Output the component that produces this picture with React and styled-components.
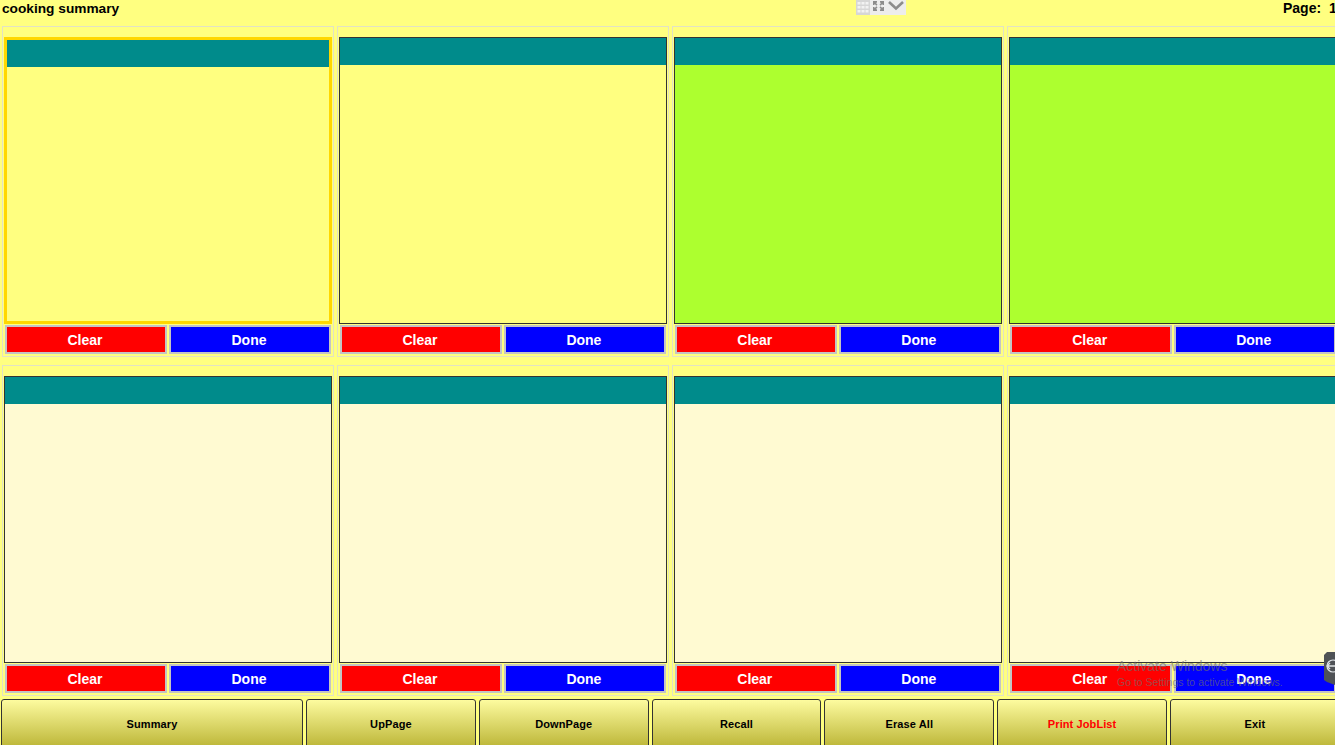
import React from "react";
import styled, { createGlobalStyle } from "styled-components";

const GlobalStyle = createGlobalStyle`
  html, body {
    margin: 0;
    padding: 0;
    height: 100%;
    overflow: hidden;
    background: #ffff80;
    font-family: "Liberation Sans", Arial, sans-serif;
  }
`;

const topRow = [
  { color: "#ffff80", selected: true },
  { color: "#ffff80" },
  { color: "#adff2f" },
  { color: "#adff2f" },
];
const bottomRow = [
  { color: "#fffad2" },
  { color: "#fffad2" },
  { color: "#fffad2" },
  { color: "#fffad2" },
];

const footerButtons = [
  { label: "Summary", width: 302 },
  { label: "UpPage", width: 169.8 },
  { label: "DownPage", width: 169.8 },
  { label: "Recall", width: 169.8 },
  { label: "Erase All", width: 169.8 },
  { label: "Print JobList", width: 169.8, danger: true },
  { label: "Exit", width: 169.8 },
];

function Card({ color, selected }) {
  return (
    <Cell>
      <Ticket $color={color} $selected={selected}>
        <TicketHeader />
      </Ticket>
      <Actions>
        <ActionButton $bg="#ff0000">Clear</ActionButton>
        <ActionButton $bg="#0000ff">Done</ActionButton>
      </Actions>
    </Cell>
  );
}

function ViewTools() {
  return (
    <Tools>
      <svg width="50" height="15" viewBox="0 0 50 15">
        <rect x="0" y="0" width="50" height="15" fill="#ededed" />
        <rect x="0" y="0" width="14" height="15" fill="#d6d6d6" />
        <g fill="#f2f2f2">
          <rect x="1.5" y="2" width="3" height="2.5" />
          <rect x="5.5" y="2" width="3" height="2.5" />
          <rect x="9.5" y="2" width="3" height="2.5" />
          <rect x="1.5" y="6" width="3" height="2.5" />
          <rect x="5.5" y="6" width="3" height="2.5" />
          <rect x="9.5" y="6" width="3" height="2.5" />
          <rect x="1.5" y="10" width="3" height="2.5" />
          <rect x="5.5" y="10" width="3" height="2.5" />
          <rect x="9.5" y="10" width="3" height="2.5" />
        </g>
        <g fill="#8c8c8c">
          <path d="M17 1h4v1.5l-1 .5 1.5 1.5-1.2 1.2L18.8 4l-.5 1H17z" />
          <path d="M28 1h-4v1.5l1 .5-1.5 1.5 1.2 1.2L26.2 4l.5 1H28z" />
          <path d="M17 11h4V9.5l-1-.5 1.5-1.5-1.2-1.2L18.8 8l-.5-1H17z" />
          <path d="M28 11h-4V9.5l1-.5-1.5-1.5 1.2-1.2L26.2 8l.5-1H28z" />
        </g>
        <path d="M33 2l7 6.5L47 2" fill="none" stroke="#8c8c8c" strokeWidth="2.6" />
      </svg>
    </Tools>
  );
}

export default function App() {
  return (
    <Page>
      <GlobalStyle />
      <TopBar>
        <Title>cooking summary</Title>
        <ViewTools />
        <PageInfo>Page:&nbsp; 1</PageInfo>
      </TopBar>
      <Grid>
        {[...topRow, ...bottomRow].map((card, i) => (
          <Card key={i} {...card} />
        ))}
      </Grid>
      <Footer>
        {footerButtons.map((b) => (
          <FooterButton key={b.label} $width={b.width} $danger={b.danger}>
            {b.label}
          </FooterButton>
        ))}
      </Footer>
      <Watermark>
        <WatermarkTitle>Activate Windows</WatermarkTitle>
        <WatermarkText>Go to Settings to activate Windows.</WatermarkText>
      </Watermark>
      <SideTab>
        <svg width="11" height="33" viewBox="0 0 11 33">
          <path d="M3 0h8v33l-8-3-3-2V3z" fill="#4f5256" />
          <path d="M3 14h8M3 14l3-3M3 14l3 3" stroke="#dfe3e6" strokeWidth="1.4" fill="none" />
          <circle cx="9" cy="14" r="6" fill="none" stroke="#dfe3e6" strokeWidth="1.2" />
        </svg>
      </SideTab>
    </Page>
  );
}

const Page = styled.div`
  position: relative;
  width: 1335px;
  height: 745px;
  overflow: hidden;
  background: #ffff80;
`;
const TopBar = styled.div`
  display: flex;
  align-items: flex-start;
  height: 26px;
  width: 1335px;
  padding-left: 2px;
  box-sizing: border-box;
`;
const Title = styled.div`
  width: 854px;
  font-size: 13.7px;
  line-height: 17px;
  font-weight: 700;
  color: #000;
`;
const Tools = styled.div`
  width: 50px;
  height: 15px;
  line-height: 0;
`;
const PageInfo = styled.div`
  margin-left: auto;
  width: 52px;
  white-space: nowrap;
  overflow: hidden;
  font-size: 14px;
  line-height: 17px;
  font-weight: 700;
  color: #000;
`;
const Grid = styled.div`
  display: grid;
  grid-template-columns: repeat(4, 332px);
  grid-template-rows: repeat(2, 331px);
  column-gap: 2.9px;
  row-gap: 8px;
  margin-left: 2px;
`;
const Cell = styled.div`
  box-sizing: border-box;
  display: flex;
  flex-direction: column;
  padding: 10px 1px 0 1px;
  border: 1px solid #e2e2c4;
`;
const Ticket = styled.div`
  box-sizing: border-box;
  height: 287px;
  background: ${(p) => p.$color};
  border: ${(p) => (p.$selected ? "3px solid #ffd700" : "1px solid #333")};
`;
const TicketHeader = styled.div`
  height: 27px;
  background: #008b8b;
`;
const Actions = styled.div`
  display: grid;
  grid-template-columns: 1fr 1fr;
  column-gap: 2px;
  padding: 1px 1px 0;
`;
const ActionButton = styled.div`
  box-sizing: border-box;
  height: 29px;
  padding-right: 2px;
  display: flex;
  align-items: center;
  justify-content: center;
  background: ${(p) => p.$bg};
  border: 2px solid #c4c4c4;
  color: #fff;
  font-size: 14px;
  font-weight: 700;
`;
const Footer = styled.div`
  display: flex;
  gap: 3px;
  margin-top: 3px;
  margin-left: 1px;
  width: 1400px;
`;
const FooterButton = styled.div`
  box-sizing: border-box;
  flex: 0 0 ${(p) => p.$width}px;
  height: 52px;
  padding-bottom: 2px;
  display: flex;
  align-items: center;
  justify-content: center;
  border: 1px solid #333;
  border-radius: 3px 3px 0 0;
  background: linear-gradient(#fdfb9f, #bfb93c 90%);
  color: ${(p) => (p.$danger ? "#ff0000" : "#000")};
  font-size: 11px;
  letter-spacing: 0.1px;
  font-weight: 700;
`;
const Watermark = styled.div`
  position: absolute;
  left: 1117px;
  top: 658px;
  color: rgba(110, 110, 110, 0.65);
  white-space: nowrap;
`;
const WatermarkTitle = styled.div`
  font-size: 14px;
  line-height: 16px;
`;
const WatermarkText = styled.div`
  font-size: 10.5px;
  line-height: 14px;
  margin-top: 1px;
`;
const SideTab = styled.div`
  position: absolute;
  right: 0;
  top: 652px;
  width: 11px;
  height: 33px;
  line-height: 0;
`;
